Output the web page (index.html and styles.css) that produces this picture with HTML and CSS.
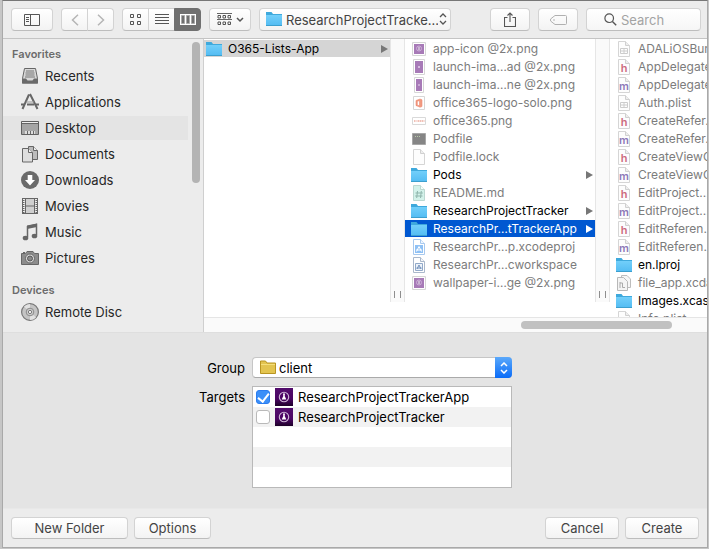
FILE: index.html
```html
<!DOCTYPE html>
<html lang="en">
<head>
<meta charset="utf-8">
<title>Add Files</title>
<link rel="stylesheet" href="styles.css">
</head>
<body>
<svg class="sprite" aria-hidden="true">
  <defs>
    <linearGradient id="blue" x1="0" y1="0" x2="0" y2="1"><stop offset="0" stop-color="#72cffa"/><stop offset="1" stop-color="#55bdf3"/></linearGradient>
    <linearGradient id="purple" x1="0" y1="0" x2="0" y2="1"><stop offset="0" stop-color="#520d6c"/><stop offset=".6" stop-color="#4b0563"/><stop offset="1" stop-color="#1d0028"/></linearGradient>
    <symbol id="folder" viewBox="0 0 16 16"><path d="M0 15V1h5.500l1.500 2h9v12z" fill="#3fa9dc"/><path d="M0 4h16v10H0z" fill="url(#blue)"/><path d="M0 14.500h16" stroke="#3c9fce"/></symbol>
    <symbol id="yellow-folder" viewBox="0 0 16 16"><path d="M.5 14.500V2h5l1.500 2h8.500v10.500z" fill="#e3c44f" stroke="#b99522"/><path d="M1 5.500h14" stroke="#f5df7c"/></symbol>
    <symbol id="page" viewBox="0 0 16 16"><path d="M2.500.5h7l4 4v11h-11z" fill="#fdfdfd" stroke="#d5d5d5"/><path d="M9.500.5v4h4" fill="#eee" stroke="#d0d0d0"/></symbol>
    <symbol id="plist" viewBox="0 0 16 16"><use href="#page"/><path d="M4.500 7.500h7v5h-7zM4.500 10h7M8 7.500v5" fill="none" stroke="#ccc"/></symbol>
    <symbol id="header" viewBox="0 0 16 16"><use href="#page"/><text x="8" y="13" class="glyph glyph-h">h</text></symbol>
    <symbol id="source" viewBox="0 0 16 16"><use href="#page"/><text x="8" y="13" class="glyph glyph-m">m</text></symbol>
    <symbol id="markdown" viewBox="0 0 16 16"><path d="M2.500.5h7l4 4v11h-11z" fill="#d3f2ea" stroke="#bcd8d1"/><path d="M9.500.5v4h4" fill="#f3fffb" stroke="#bcd8d1"/><path d="M6.500 6l-.8 7M10.300 6l-.8 7M4.500 8h7.300M4.200 11h7.300" stroke="#8fb5ac" fill="none"/></symbol>
    <symbol id="image-app" viewBox="0 0 16 16"><path d="M2.500 2.500h11v11h-11z" fill="#a77ab7" stroke="#fff"/><path d="M1.500 1.500h13v13h-13z" fill="none" stroke="#d6d6d6"/><circle cx="8" cy="7.500" r="2.500" fill="none" stroke="#cdb0d8"/><path d="M8 6v3" stroke="#eee"/></symbol>
    <symbol id="image-pad" viewBox="0 0 16 16"><path d="M2.500.5h11v15h-11z" fill="#fff" stroke="#d6d6d6"/><path d="M4 2h8v12H4z" fill="#a77ab7"/><path d="M8 7v2" stroke="#d5bbe0" stroke-width="2"/></symbol>
    <symbol id="image-phone" viewBox="0 0 16 16"><path d="M3.500.5h9v15h-9z" fill="#fff" stroke="#d6d6d6"/><path d="M5 2h6v12H5z" fill="#a77ab7"/><path d="M8 7v2" stroke="#c9a9d5" stroke-width="2"/></symbol>
    <symbol id="office" viewBox="0 0 16 16"><path d="M2.500 1.500h11v13h-11z" fill="#fff" stroke="#d6d6d6"/><path d="M5 10.500V5.500L9 4l2 .8v6.700l-2 .7-4-1.700h3.500V5.700L6.300 6.300v3.700z" fill="#f19a80" stroke="#ee8c72" stroke-width=".6"/></symbol>
    <symbol id="office-wide" viewBox="0 0 16 16"><path d="M1.500 4.500h13v7h-13z" fill="#fff" stroke="#d9d9d9"/><path d="M3 8h2.500M6.500 8h7" stroke="#edada0" stroke-width="1.500" stroke-dasharray="1.500 .5"/></symbol>
    <symbol id="exec" viewBox="0 0 16 16"><path d="M1.500 2.500h13v11h-13z" fill="#858585" stroke="#a7a7a7"/><path d="M4 5.500h5" stroke="#b7c8a8" stroke-dasharray="1 1"/></symbol>
    <symbol id="project" viewBox="0 0 16 16"><path d="M2.500.5h7l4 4v11h-11z" fill="#fff" stroke="#a8c9ee"/><path d="M9.500.5v4h4" fill="#eef6ff" stroke="#a8c9ee"/><path d="M4 6h8v8H4z" fill="#8fc1f5"/><path d="M5.500 12.500L8 7.500l2.500 5M5 11h6" stroke="#fff" fill="none"/></symbol>
    <symbol id="workspace" viewBox="0 0 16 16"><path d="M2.500.5h7l4 4v11h-11z" fill="#fff" stroke="#aab8cb"/><path d="M9.500.5v4h4" fill="#f4f6f9" stroke="#aab8cb"/><path d="M4.500 6.500h7v7h-7z" fill="#edf3fa" stroke="#91a9c9"/><path d="M6 12l2-4 2 4M5.500 11h5" stroke="#7190bb" fill="none"/></symbol>
    <symbol id="model" viewBox="0 0 16 16"><path d="M5.500.5h5.500l3.500 3.500v8.500h-9z" fill="#f6f6f6" stroke="#bdbdbd"/><path d="M1.500 2.500h6l4 4v9h-10z" fill="#f4f4f4" stroke="#b8b8b8"/><path d="M4 7v6M4 8h2.500v4.500H9" stroke="#aaa" fill="none"/></symbol>
    <symbol id="target" viewBox="0 0 18 18"><path d="M0 0h18v18H0z" fill="url(#purple)"/><circle cx="9" cy="9" r="4.700" fill="none" stroke="#cdb7d6" stroke-width="1.100"/><path d="M8 5.500h2L9.700 8l1.600 3.500H6.700L8.300 8z" fill="#fff"/></symbol>
  </defs>
</svg>

<main class="window">
  <header class="toolbar">
    <button class="btn tool" aria-label="Toggle sidebar"><svg width="16" height="12"><path d="M.5.500h15v11H.5zM6.500.5v11" fill="none" stroke="#555"/><path d="M2 3.500h3M2 5.500h3M2 7.500h3" stroke="#555"/></svg></button>
    <div class="group">
      <button class="btn" aria-label="Back"><svg width="8" height="12"><path d="M7 .8L1.500 6 7 11.200" fill="none" stroke="#b5b5b5" stroke-width="1.500"/></svg></button>
      <button class="btn" aria-label="Forward"><svg width="8" height="12"><path d="M1 .8L6.500 6 1 11.200" fill="none" stroke="#b5b5b5" stroke-width="1.500"/></svg></button>
    </div>
    <div class="group">
      <button class="btn" aria-label="Icon view"><svg width="11" height="11"><path d="M.5.5h3v3h-3zM7.500.5h3v3h-3zM.5 7.500h3v3h-3zM7.500 7.500h3v3h-3z" fill="none" stroke="#555"/></svg></button>
      <button class="btn" aria-label="List view"><svg width="14" height="11"><path d="M0 .5h14M0 3.500h14M0 6.500h14M0 9.500h14" stroke="#555"/></svg></button>
      <button class="btn active" aria-label="Column view" aria-pressed="true"><svg width="16" height="11"><path d="M0 0h16v11H0z" fill="#fff"/><path d="M1.500 1.500h3v8h-3zM6.500 1.500h3v8h-3zM11.500 1.500h3v8h-3z" fill="#707070" stroke="#aaa"/></svg></button>
    </div>
    <button class="btn tool" aria-label="Arrange"><svg width="27" height="13"><path d="M0 .5h15M0 6.500h15" stroke="#666"/><path d="M1 2.500h2.500v2.500H1zM6 2.500h2.500v2.500H6zM11 2.500h2.500v2.500H11zM1 9h2.500v2.500H1zM6 9h2.500v2.500H6zM11 9h2.500v2.500H11z" fill="none" stroke="#555"/><path d="M20 5l3 3 3-3" fill="none" stroke="#555" stroke-width="1.500"/></svg></button>
    <div class="picker path">
      <svg class="picker-icon" width="16" height="16"><use href="#folder"/></svg>
      <select aria-label="Location"><option>ResearchProjectTracke...</option></select>
      <svg class="picker-arrows" width="8" height="12"><path d="M1 4l3-3 3 3M1 8l3 3 3-3" fill="none" stroke="#555" stroke-width="1.300"/></svg>
    </div>
    <button class="btn share" aria-label="Share"><svg width="12" height="15"><path d="M3.500 5.500h-3v9h11v-9h-3M6 10V1M3.500 3.500L6 1l2.500 2.500" fill="none" stroke="#555" stroke-width="1.100"/></svg></button>
    <button class="btn tag" aria-label="Tags"><svg width="17" height="10"><path d="M5 .5h10.500q1 0 1 1v7q0 1-1 1H5L.8 6.200q-.8-1.200 0-2.400z" fill="none" stroke="#b0b0b0"/><circle cx="4" cy="5" r=".8" fill="#aaa"/></svg></button>
    <label class="search"><svg width="13" height="13"><circle cx="5.200" cy="5.200" r="4.300" fill="none" stroke="#555" stroke-width="1.200"/><path d="M8.400 8.400l3.800 3.800" stroke="#555" stroke-width="1.400"/></svg><input type="search" placeholder="Search" aria-label="Search"></label>
  </header>

  <div class="browser">
    <nav class="sidebar">
      <div class="places">
        <h2>Favorites</h2>
        <a href="#"><svg width="18" height="18"><path d="M3.500 1.500h11l2 10v4.500h-15v-4.500z" fill="#d8d8d8" stroke="#666"/><path d="M5 4h8M4.500 6h9M4.500 8h9M4 10h10" stroke="#777"/><path d="M1 11.500h4l1.500 2h5l1.500-2h4v5H1z" fill="#6a6a6a"/></svg>Recents</a>
        <a href="#"><svg width="18" height="18"><path d="M8 1.500L1.500 16M9 1l7.500 15M10 1.500L9 3" fill="none" stroke="#666" stroke-width="2"/><path d="M0 11.500h4M6 11.500h7M15 11.500h3" stroke="#666" stroke-width="2.200"/><path d="M5 9h8" stroke="#999"/></svg>Applications</a>
        <a href="#" class="current" aria-current="page"><svg width="18" height="18"><path d="M.5 2.500h17v13H.5z" fill="#a6a6a6" stroke="#606060"/><path d="M1 3.500h16" stroke="#eee"/><path d="M1 4.500h16" stroke="#666"/><path d="M4 12h10v3H4z" fill="#ddd"/><path d="M6.500 12v3M9.500 12v3M12.500 12v3" stroke="#666"/></svg>Desktop</a>
        <a href="#"><svg width="18" height="18"><path d="M7.500 1.500h5l4 4v9h-9z" fill="#bcbcbc" stroke="#666"/><path d="M12.500 1.500v4h4" fill="#eee" stroke="#666"/><path d="M1.500 3.500h6l4 4v9.500h-10z" fill="#dedede" stroke="#666"/><path d="M7.500 3.500v4h4" fill="#eee" stroke="#666"/></svg>Documents</a>
        <a href="#"><svg width="18" height="18"><circle cx="9" cy="9" r="9" fill="#6a6a6a"/><path d="M6.700 4h4.600v5H14l-5 5.500L4 9h2.700z" fill="#fff"/></svg>Downloads</a>
        <a href="#"><svg width="18" height="18"><path d="M1.500 1v16M16.500 1v16" stroke="#666"/><path d="M2.500 1v16M15.500 1v16" stroke="#666" stroke-width="2" stroke-dasharray="1 1"/><path d="M4.500 1.500h9v15h-9zM4.500 9h9" fill="#cfcfcf" stroke="#666"/><path d="M1 1.500h16M1 16.500h16" stroke="#666"/></svg>Movies</a>
        <a href="#"><svg width="18" height="18"><path d="M6.500 14V3.500l9-2V12" fill="none" stroke="#666" stroke-width="1.500"/><path d="M6 2.500l10-2v3.500l-10 2z" fill="#666"/><ellipse cx="4.500" cy="15" rx="2.800" ry="2.300" fill="#666"/><ellipse cx="13.500" cy="13" rx="2.800" ry="2.300" fill="#666"/></svg>Music</a>
        <a href="#"><svg width="18" height="18"><path d="M.5 4.500h4l1.500-2h6l1.500 2h4v11H.5z" fill="#8c8c8c" stroke="#666"/><circle cx="9" cy="9.500" r="4.500" fill="#d8d8d8" stroke="#666"/><circle cx="9" cy="9.500" r="2.500" fill="#8a8a8a" stroke="#555"/><path d="M2 3.500h2" stroke="#666"/></svg>Pictures</a>
        <h2>Devices</h2>
        <a href="#"><svg width="18" height="18"><circle cx="9" cy="9" r="8.400" fill="#c4c4c4" stroke="#777" stroke-width="1.200"/><path d="M9 9L3 3.500A8 8 0 0 1 9 1zM9 9l6 5.500A8 8 0 0 1 9 17z" fill="#e2e2e2"/><circle cx="9" cy="9" r="3.800" fill="#ccc" stroke="#8a8a8a"/><circle cx="9" cy="9" r="1.600" fill="#fff" stroke="#777"/></svg>Remote Disc</a>
      </div>
      <div class="scroll-y"></div>
    </nav>

    <section class="files" aria-label="Files">
      <div class="columns">
        <div class="column first">
          <a href="#" class="dir open"><svg><use href="#folder"/></svg>O365-Lists-App</a>
        </div>
        <div class="grip"></div>
        <div class="column">
          <a href="#"><svg><use href="#image-app"/></svg>app-icon @2x.png</a>
          <a href="#"><svg><use href="#image-pad"/></svg>launch-ima…ad @2x.png</a>
          <a href="#"><svg><use href="#image-phone"/></svg>launch-ima…ne @2x.png</a>
          <a href="#"><svg><use href="#office"/></svg>office365-logo-solo.png</a>
          <a href="#"><svg><use href="#office-wide"/></svg>office365.png</a>
          <a href="#"><svg><use href="#exec"/></svg>Podfile</a>
          <a href="#"><svg><use href="#page"/></svg>Podfile.lock</a>
          <a href="#" class="dir"><svg><use href="#folder"/></svg>Pods</a>
          <a href="#"><svg><use href="#markdown"/></svg>README.md</a>
          <a href="#" class="dir"><svg><use href="#folder"/></svg>ResearchProjectTracker</a>
          <a href="#" class="dir selected"><svg><use href="#folder"/></svg>ResearchPr…tTrackerApp</a>
          <a href="#"><svg><use href="#project"/></svg>ResearchPr…p.xcodeproj</a>
          <a href="#"><svg><use href="#workspace"/></svg>ResearchPr…cworkspace</a>
          <a href="#"><svg><use href="#image-app"/></svg>wallpaper-i…ge @2x.png</a>
        </div>
        <div class="grip"></div>
        <div class="column last">
          <a href="#"><svg><use href="#plist"/></svg>ADALiOSBun</a>
          <a href="#"><svg><use href="#header"/></svg>AppDelegate</a>
          <a href="#"><svg><use href="#source"/></svg>AppDelegate</a>
          <a href="#"><svg><use href="#plist"/></svg>Auth.plist</a>
          <a href="#"><svg><use href="#header"/></svg>CreateRefer.</a>
          <a href="#"><svg><use href="#source"/></svg>CreateRefer.</a>
          <a href="#"><svg><use href="#header"/></svg>CreateViewC</a>
          <a href="#"><svg><use href="#source"/></svg>CreateViewC</a>
          <a href="#"><svg><use href="#header"/></svg>EditProject...</a>
          <a href="#"><svg><use href="#source"/></svg>EditProject...</a>
          <a href="#"><svg><use href="#header"/></svg>EditReferen.</a>
          <a href="#"><svg><use href="#source"/></svg>EditReferen.</a>
          <a href="#" class="dir"><svg><use href="#folder"/></svg>en.lproj</a>
          <a href="#"><svg><use href="#model"/></svg>file_app.xcda</a>
          <a href="#" class="dir"><svg><use href="#folder"/></svg>Images.xcas</a>
          <a href="#"><svg><use href="#page"/></svg>Info.plist</a>
        </div>
      </div>
      <div class="scroll-x"><div class="thumb"></div></div>
    </section>
  </div>

  <form class="options">
    <label for="group">Group</label>
    <div class="picker client">
      <svg class="picker-icon" width="16" height="16"><use href="#yellow-folder"/></svg>
      <select id="group"><option>client</option></select>
      <span class="picker-cap"><svg width="8" height="12"><path d="M1 4l3-3 3 3M1 8l3 3 3-3" fill="none" stroke="#fff" stroke-width="1.500"/></svg></span>
    </div>
    <span class="targets-label" id="targets">Targets</span>
    <div class="targets" role="group" aria-labelledby="targets">
      <label><input type="checkbox" checked><svg width="18" height="18"><use href="#target"/></svg>ResearchProjectTrackerApp</label>
      <label><input type="checkbox"><svg width="18" height="18"><use href="#target"/></svg>ResearchProjectTracker</label>
    </div>
  </form>

  <footer class="footer">
    <button class="btn new-folder">New Folder</button>
    <button class="btn more">Options</button>
    <button class="btn cancel">Cancel</button>
    <button class="btn create">Create</button>
  </footer>
</main>
</body>
</html>
```
FILE: styles.css
```css
* { box-sizing: border-box; }

body {
  margin: 0;
  height: 100vh;
  padding: 0 1px 1px 2px;
  background: #c6c6c6;
  color: #262626;
  font: 13px/18px Inter, "Liberation Sans", sans-serif;
}

button, input, select { font: inherit; color: inherit; margin: 0; }
a { color: inherit; text-decoration: none; }
svg { display: block; flex: none; }
.sprite { position: absolute; width: 0; height: 0; }
.glyph { font: 600 11px Inter, sans-serif; text-anchor: middle; }
.glyph-h { fill: #cc6a7e; }
.glyph-m { fill: #8d79b8; }

.window {
  display: flex;
  flex-direction: column;
  height: 100%;
  border: 1px solid #a9a9a9;
  border-top-color: #777;
  background: #ececec;
  overflow: hidden;
}

/* Toolbar */
.toolbar {
  display: flex;
  flex: none;
  align-items: center;
  gap: 8px;
  height: 38px;
  padding: 0 6px 0 8px;
  border-bottom: 1px solid #c4c4c4;
}

.btn {
  display: flex;
  align-items: center;
  justify-content: center;
  height: 23px;
  padding: 0;
  border: 1px solid #d3d3d3;
  border-bottom-color: #bdbdbd;
  border-radius: 4px;
  background: linear-gradient(#fff, #f3f3f3);
  color: #444;
}

.tool { width: 42px; }
.share, .tag { width: 40px; }
.share { margin-left: auto; }

.group { display: flex; }
.group .btn { width: 27px; }
.group .btn + .btn { margin-left: -1px; border-top-left-radius: 0; border-bottom-left-radius: 0; }
.group .btn:not(:last-child) { border-top-right-radius: 0; border-bottom-right-radius: 0; }
.group .active { background: #707070; border-color: #707070; }

.picker { position: relative; }
.picker select {
  display: block;
  width: 100%;
  height: 23px;
  padding: 0 12px 0 26px;
  border: 1px solid #d3d3d3;
  border-bottom-color: #bdbdbd;
  border-radius: 4px;
  background: linear-gradient(#fff, #f3f3f3);
  appearance: none;
}
.picker-icon { position: absolute; left: 7px; top: 3px; }
.picker-arrows { position: absolute; right: 4px; top: 5px; }
.path { width: 192px; color: #444; }

.search {
  display: flex;
  align-items: center;
  gap: 4px;
  width: 115px;
  height: 23px;
  padding-left: 17px;
  border: 1px solid #d3d3d3;
  border-bottom-color: #bdbdbd;
  border-radius: 4px;
  background: linear-gradient(#fff, #f6f6f6);
}
.search input { flex: 1; min-width: 0; padding: 0; border: 0; background: none; outline: 0; appearance: none; }
.search input::placeholder { color: #a3a3a3; }

/* File browser */
.browser { display: flex; flex: 1; min-height: 0; }

.sidebar {
  display: flex;
  flex: none;
  width: 201px;
  padding: 3px 3px 0 0;
  border-right: 1px solid #cfcfcf;
}
.places { display: flex; flex: 1; flex-direction: column; gap: 2px; margin-right: 4px; }
.places h2 {
  margin: 5px 0 0 9px;
  color: #6b6b6b;
  font-size: 11px;
  font-weight: 600;
  line-height: 15px;
}
.places a + h2 { margin-top: 11px; }
.places a { display: flex; align-items: center; gap: 6px; height: 24px; padding-left: 18px; }
.places .current { background: #e4e4e4; }
.scroll-y { width: 8px; height: 141px; border-radius: 4px; background: #b4b4b4; }

.files { display: flex; flex: 1; flex-direction: column; min-width: 0; background: #fff; }
.columns { display: flex; flex: 1; min-height: 0; overflow: hidden; }
.column { flex: none; width: 190px; padding-top: 1px; }
.first { width: 186px; }
.last { flex: 1; min-width: 0; overflow: hidden; }
.column a {
  display: flex;
  align-items: center;
  height: 17px;
  margin-bottom: 1px;
  padding-left: 6px;
  gap: 6px;
  color: #7c7c7c;
  font-size: 12px;
  white-space: nowrap;
}
.first a { padding-left: 2px; }
.column svg { width: 16px; height: 16px; }
.column .dir { color: #000; }
.column:not(.last) .dir::after {
  content: "";
  margin-left: auto;
  margin-right: 2px;
  border: solid transparent;
  border-width: 4px 0 4px 7px;
  border-left-color: #777;
}
.column .open { background: #d5d5d5; }
.column .selected { background: #0058d1; color: #fff; }
.column .selected::after { border-left-color: #fff !important; }

.grip {
  display: flex;
  flex: none;
  align-items: flex-end;
  justify-content: center;
  width: 15px;
  margin-bottom: 15px;
  padding-bottom: 4px;
  border: solid #e6e6e6;
  border-width: 0 1px;
  background: #fafafa;
}
.grip::after { content: ""; width: 5px; height: 7px; border: solid #8e8e8e; border-width: 0 1px; }

.scroll-x { flex: none; height: 15px; padding-top: 3px; border-top: 1px solid #e5e5e5; background: #fafafa; }
.thumb { width: 30%; height: 8px; margin-left: 63%; border-radius: 4px; background: #c1c1c1; }

/* Group and targets */
.options {
  display: grid;
  flex: none;
  grid-template-columns: 242px 260px;
  column-gap: 7px;
  row-gap: 7px;
  padding: 24px 0 20px;
  border-top: 1px solid #dedede;
  background: #e4e4e4;
  color: #000;
}
.options > label, .targets-label { text-align: right; }
.options > label { line-height: 22px; }
.targets-label { padding-top: 2px; }
.client select { height: 21px; border-color: #c6c6c6; border-bottom-color: #aaa; background: #fff; }
.client .picker-icon { top: 2px; left: 8px; }
.picker-cap {
  position: absolute;
  top: 0;
  right: 0;
  display: flex;
  align-items: center;
  justify-content: center;
  width: 17px;
  height: 21px;
  border-radius: 0 4px 4px 0;
  background: linear-gradient(#5ba9fb, #0a6cf8);
  pointer-events: none;
}
.targets {
  height: 102px;
  border: 1px solid #b9b9b9;
  background: repeating-linear-gradient(#fff 0 20px, #f2f2f2 20px 40px);
}
.targets label { display: flex; align-items: center; gap: 5px; height: 20px; padding-left: 3px; }
.targets input {
  display: grid;
  place-items: center;
  width: 14px;
  height: 14px;
  border: 1px solid #b9b9b9;
  border-radius: 3px;
  background: #fff;
  appearance: none;
}
.targets input:checked { border-color: #2a7cf0; background: #3b8ff8; }
.targets input:checked::after {
  content: "";
  width: 5px;
  height: 9px;
  margin-bottom: 2px;
  border: solid #fff;
  border-width: 0 2px 2px 0;
  transform: rotate(38deg);
}

/* Footer */
.footer {
  display: flex;
  flex: none;
  gap: 6px;
  height: 39px;
  padding: 8px 8px 0;
  border-top: 1px solid #e8e8e8;
}
.footer .btn { height: 22px; }
.new-folder { width: 117px; }
.more { width: 77px; }
.cancel, .create { width: 74px; }
.cancel { margin-left: auto; }
```
